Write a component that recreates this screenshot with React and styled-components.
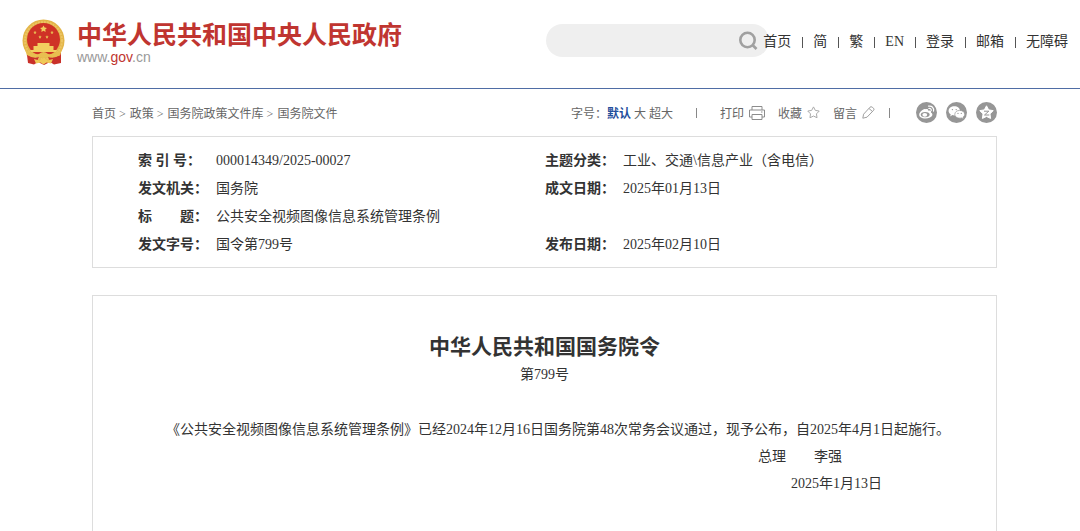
import React, { useState } from 'react';
import styled, { createGlobalStyle } from 'styled-components';

const navLinks = ['首页', '简', '繁', 'EN', '登录', '邮箱', '无障碍'];
const crumbs = ['首页', '政策', '国务院政策文件库', '国务院文件'];
const sizes = ['默认', '大', '超大'];
const rows = [
    ['索 引 号：', '000014349/2025-00027', '主题分类：', '工业、交通\\信息产业（含电信）'],
    ['发文机关：', '国务院', '成文日期：', '2025年01月13日'],
    ['标　　题：', '公共安全视频图像信息系统管理条例'],
    ['发文字号：', '国令第799号', '发布日期：', '2025年02月10日'],
];

const star = (cx, cy, r) => {
    const pts = [];
    for (let i = 0; i < 10; i++) {
        const a = -Math.PI / 2 + (i * Math.PI) / 5;
        const d = i % 2 ? r * 0.52 : r;
        pts.push(`${(cx + d * Math.cos(a)).toFixed(2)},${(cy + d * Math.sin(a)).toFixed(2)}`);
    }
    return pts.join(' ');
};

const Emblem = () => (
    <svg width="44" height="47" viewBox="0 0 44 47" aria-hidden="true">
        <path d="M6 31 L6 44 L12 45.5 L16 43 L22 46 L28 43 L32 45.5 L39 44 L39 31 Z" fill="#c9302a" />
        <circle cx="21.5" cy="21.5" r="21" fill="#e3b548" />
        <circle cx="21.5" cy="21.5" r="18.5" fill="none" stroke="#ecc564" strokeWidth="2" strokeDasharray="2 1" />
        <circle cx="21.5" cy="20.5" r="16.5" fill="#cf3226" />
        <polygon points={star(21.5, 10, 3.6)} fill="#f2cf5f" />
        <polygon points={star(13, 13.5, 1.7)} fill="#e8b850" />
        <polygon points={star(30, 13.5, 1.7)} fill="#e8b850" />
        <polygon points={star(18, 18, 1.7)} fill="#e8b850" />
        <polygon points={star(25, 18, 1.7)} fill="#e8b850" />
        <path d="M15.500 24h12v3h4v4h-20v-4h4zM8 31h27l-1 2H9z" fill="#f2cf5f" />
        <path d="M3 30 Q11 36 17 35 Q21.5 31 26 35 Q32 36 40 30 L38 37 Q31 39 27 37 Q21.5 41 16 37 Q11 39 5 37 Z" fill="#e8bf50" />
        <path d="M5 36 Q11 40 17 38 L14 44 L6 44 Z M39 36 Q32 40 26 38 L29 44 L39 44 Z" fill="#c9302a" />
        <path d="M12 40l5.500 1.500 4-2.500 4 2.500L31 40l-2 4.500-4.500-1-3 2-3-2-4.500 1z" fill="#efc957" />
    </svg>
);

const SearchIcon = () => (
    <svg width="20" height="20" viewBox="0 0 20 20" fill="none" stroke="#a0a0a0" strokeWidth="2.600">
        <circle cx="9.5" cy="9" r="7.2" />
        <path d="M14.500 14l4 4" />
    </svg>
);

const PrintIcon = () => (
    <svg width="16" height="16" viewBox="0 0 16 16" fill="none" stroke="#8c8c8c">
        <path d="M3 5V1.500h10V5M3 12H.500V5h15v7H13M3 9.500h10v5H3z" />
        <path d="M12 7h1.500" />
    </svg>
);

const StarIcon = () => (
    <svg width="13" height="13" viewBox="0 0 13 13" fill="none" stroke="#aaa" strokeLinejoin="round">
        <polygon points={star(6.5, 6.9, 6)} />
    </svg>
);

const PencilIcon = () => (
    <svg width="13" height="13" viewBox="0 0 13 13" fill="none" stroke="#a0a0a0" strokeLinejoin="round">
        <path d="M.8 12.200l.8-4L8 1.200q1-1 2.200 0l1.300 1q1 1 .2 2L5 11.200zM7 2.500l3.500 3" />
    </svg>
);

const WeiboIcon = () => (
    <svg width="21" height="21" viewBox="0 0 21 21">
        <circle cx="10.5" cy="10.5" r="10.5" fill="#969696" />
        <path d="M9.500 7.200c1.700-.7 3 0 2.600 1.500 2-.6 3.600.2 2.800 1.800 3.500 1.700.6 6-5.200 6-4.500 0-6.700-1.800-6.500-4 .2-2.100 3.500-5.100 5.300-5.400.8-.1 1.100.1 1 .1z" fill="#fff" />
        <ellipse cx="9.2" cy="12.6" rx="4.4" ry="2.7" fill="#969696" />
        <ellipse cx="8.8" cy="12.8" rx="2.4" ry="1.900" fill="#fff" />
        <path d="M12.500 4.200c3.300-.7 5.800 1.700 5 5M12.800 6.500c1.700-.3 2.700.7 2.400 2.200" fill="none" stroke="#fff" strokeWidth="1.2" strokeLinecap="round" />
    </svg>
);

const WechatIcon = () => (
    <svg width="21" height="21" viewBox="0 0 21 21">
        <circle cx="10.5" cy="10.5" r="10.5" fill="#969696" />
        <path d="M8.300 4.200c3.300 0 5.700 2.100 5.700 4.700s-2.400 4.500-5.700 4.500c-.7 0-1.400-.1-2-.3L4.300 14.500l.4-2.300C3.400 11.400 2.600 10.200 2.600 8.900c0-2.600 2.500-4.700 5.700-4.700z" fill="#fff" />
        <path d="M13.700 8.400c2.800 0 5 1.700 5 3.900 0 1.200-.7 2.200-1.700 2.900l.5 1.700-1.900-1c-3.800 1-6.800-.9-6.800-3.600 0-2.200 2.100-3.900 4.900-3.900z" fill="#fff" stroke="#969696" strokeWidth=".7" />
        <g fill="#969696">
            <circle cx="6.400" cy="7.600" r=".7" />
            <circle cx="10.200" cy="7.600" r=".7" />
            <circle cx="12" cy="11.400" r=".6" />
            <circle cx="15.300" cy="11.400" r=".6" />
        </g>
    </svg>
);

const QzoneIcon = () => (
    <svg width="21" height="21" viewBox="0 0 21 21">
        <circle cx="10.5" cy="10.5" r="10.5" fill="#969696" />
        <polygon points={star(10.5, 10.8, 7)} fill="#fff" stroke="#fff" strokeLinejoin="round" />
        <path d="M8 9.200h4.800l-4.300 3.800h4.800" fill="none" stroke="#969696" />
    </svg>
);

const App = () => {
    const [size, setSize] = useState('默认');
    const [query, setQuery] = useState('');

    return (
        <Page>
            <GlobalStyle />
            <Header>
                <Brand href="#">
                    <Emblem />
                    <BrandText>
                        <BrandName>中华人民共和国中央人民政府</BrandName>
                        <Domain>www.<em>gov</em>.cn</Domain>
                    </BrandText>
                </Brand>
                <Search onSubmit={(ev) => ev.preventDefault()}>
                    <SearchInput aria-label="搜索" value={query} onChange={(e) => setQuery(e.target.value)} />
                    <IconButton aria-label="提交搜索" type="submit"><SearchIcon /></IconButton>
                </Search>
                <Nav>
                    {navLinks.map((name) => <NavItem key={name}><a href="#">{name}</a></NavItem>)}
                </Nav>
            </Header>

            <Main>
                <Toolbar>
                    <Crumbs>
                        {crumbs.map((name, i) => (
                            <React.Fragment key={name}>
                                {i > 0 && <span>&gt;</span>}
                                <a href="#">{name}</a>
                            </React.Fragment>
                        ))}
                    </Crumbs>
                    <Sizes>
                        <span>字号：</span>
                        {sizes.map((name) => (
                            <SizeButton key={name} type="button" $active={name === size} onClick={() => setSize(name)}>{name}</SizeButton>
                        ))}
                    </Sizes>
                    <Divider $left={23} $right={23} />
                    <Tools>
                        <Tool type="button">打印<PrintIcon /></Tool>
                        <Tool type="button">收藏<StarIcon /></Tool>
                        <Tool type="button">留言<PencilIcon /></Tool>
                    </Tools>
                    <Divider $left={14} $right={26} />
                    <Share>
                        <a href="#" aria-label="微博"><WeiboIcon /></a>
                        <a href="#" aria-label="微信"><WechatIcon /></a>
                        <a href="#" aria-label="QQ空间"><QzoneIcon /></a>
                    </Share>
                </Toolbar>

                <MetaBox>
                    <MetaTable>
                        <colgroup>
                            <col width="78" />
                            <col width="329" />
                            <col width="78" />
                            <col />
                        </colgroup>
                        <tbody>
                            {rows.map(([label, value, label2, value2]) => (
                                <tr key={label}>
                                    <th scope="row">{label}</th>
                                    <td colSpan={label2 ? 1 : 3}>{value}</td>
                                    {label2 && <th scope="row">{label2}</th>}
                                    {label2 && <td>{value2}</td>}
                                </tr>
                            ))}
                        </tbody>
                    </MetaTable>
                </MetaBox>

                <Article>
                    <Title>中华人民共和国国务院令</Title>
                    <Number>第799号</Number>
                    <Paragraph>《公共安全视频图像信息系统管理条例》已经2024年12月16日国务院第48次常务会议通过，现予公布，自2025年4月1日起施行。</Paragraph>
                    <Signature $end={109}>总理　　李强</Signature>
                    <Signature $end={69}>2025年1月13日</Signature>
                </Article>
            </Main>
        </Page>
    );
};

const GlobalStyle = createGlobalStyle`
    * {
        box-sizing: border-box;
    }
    body {
        margin: 0;
        background: #fff;
        color: #333;
        font-family: "Liberation Serif", "Noto Sans CJK SC", serif;
        font-size: 14px;
    }
    a {
        color: inherit;
        text-decoration: none;
    }
    button {
        padding: 0;
        border: 0;
        background: none;
        color: inherit;
        font: inherit;
        cursor: pointer;
    }
    svg {
        display: block;
        flex: none;
    }
`;

const Page = styled.div`
    display: flex;
    flex-direction: column;
    min-height: 100vh;
`;

const Header = styled.header`
    display: flex;
    align-items: flex-start;
    padding: 18px 12px 22px 22px;
    border-bottom: 1px solid #4f6da5;
    white-space: nowrap;
`;

const Brand = styled.a`
    display: flex;
    align-items: flex-end;
    gap: 11px;
    margin-right: auto;
`;

const BrandText = styled.span`
    display: flex;
    flex-direction: column;
`;

const BrandName = styled.strong`
    color: #c03530;
    font: bold 25px/30px "Noto Sans CJK SC", sans-serif;
`;

const Domain = styled.span`
    color: #999;
    font: 14px/18px "Liberation Sans", sans-serif;

    em {
        color: #c03530;
        font-style: normal;
    }
`;

const Search = styled.form`
    display: flex;
    align-items: center;
    width: 223px;
    height: 33px;
    margin-top: 6px;
    padding: 0 11px 0 16px;
    border-radius: 17px;
    background: #efefef;
`;

const SearchInput = styled.input`
    flex: 1;
    min-width: 0;
    border: 0;
    outline: 0;
    background: none;
    font: inherit;
`;

const IconButton = styled.button`
    display: flex;
`;

const Nav = styled.nav`
    display: flex;
    margin: 14px 0 0 -6px;
    line-height: 20px;
`;

const NavItem = styled.span`
    display: flex;
    align-items: center;

    & + &::before {
        content: "";
        width: 1px;
        height: 11px;
        margin: 0 10px 0 11px;
        background: #555;
    }
`;

const Main = styled.main`
    display: flex;
    flex: 1;
    flex-direction: column;
    padding: 0 83px 0 92px;
`;

const Toolbar = styled.div`
    display: flex;
    align-items: center;
    height: 47px;
    color: #666;
    font-size: 12px;
    white-space: nowrap;
`;

const Crumbs = styled.nav`
    margin-right: auto;

    span {
        margin: 0 4px 0 3px;
    }
`;

const Sizes = styled.div`
    display: flex;
    gap: 3px;

    span {
        margin-right: -3px;
    }
`;

const SizeButton = styled.button`
    color: ${(props) => (props.$active ? '#1f4e9c' : 'inherit')};
    font-weight: ${(props) => (props.$active ? 'bold' : 'normal')};
`;

const Divider = styled.span`
    width: 1px;
    height: 10px;
    margin: 0 ${(props) => props.$right}px 0 ${(props) => props.$left}px;
    background: #888;
`;

const Tools = styled.div`
    display: flex;
    gap: 13px;
`;

const Tool = styled.button`
    display: flex;
    align-items: center;
    gap: 5px;
`;

const Share = styled.div`
    display: flex;
    gap: 9px;
`;

const MetaBox = styled.section`
    padding: 10px 45px 8px;
    border: 1px solid #ddd;
`;

const MetaTable = styled.table`
    width: 100%;
    border-collapse: collapse;
    table-layout: fixed;
    line-height: 28px;

    th, td {
        height: 28px;
        padding: 0;
        text-align: left;
        white-space: nowrap;
    }
`;

const Article = styled.article`
    flex: 1;
    margin-top: 27px;
    padding: 37px 45px 27px;
    border: 1px solid #ddd;
    border-bottom: 0;
    line-height: 27px;
`;

const Title = styled.h1`
    margin: 0;
    font-size: 21px;
    line-height: 28px;
    text-align: center;
`;

const Number = styled.p`
    margin: 0 0 28px;
    text-align: center;
`;

const Paragraph = styled.p`
    margin: 0;
    text-indent: 2em;
`;

const Signature = styled.p`
    margin: 0;
    padding-right: ${(props) => props.$end}px;
    text-align: right;
`;

export default App;
